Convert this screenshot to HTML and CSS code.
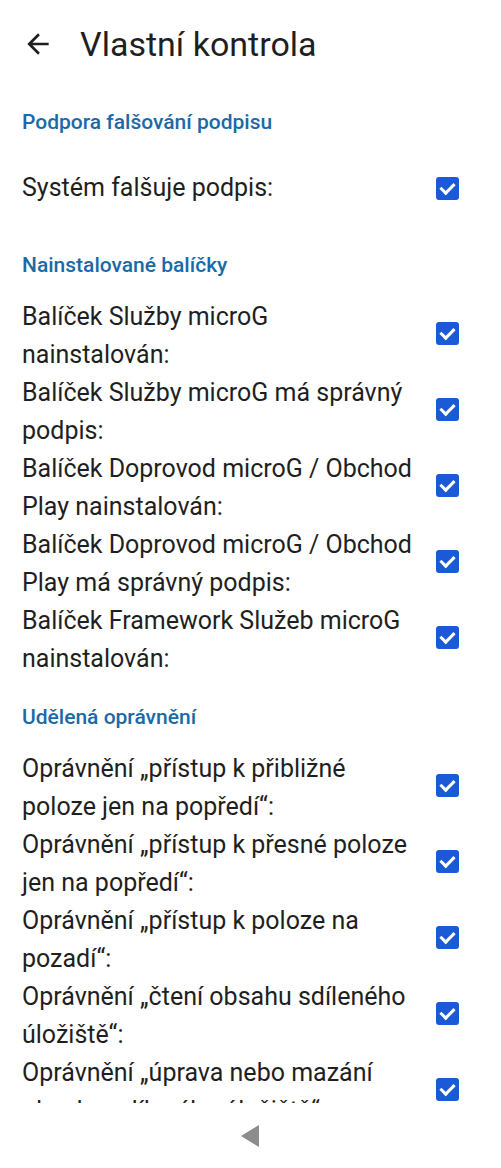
FILE: index.html
```html
<!DOCTYPE html>
<html lang="cs">

<head>
    <meta charset="UTF-8">
    <meta name="viewport" content="width=device-width, initial-scale=1.0">
    <title>Vlastní kontrola</title>
    <link rel="stylesheet" href="styles.css">
</head>

<body>

    <div class="screen">
        <div class="content">

            <!-- Toolbar -->
            <div class="toolbar">
                <svg class="back" viewBox="0 0 24 24" width="32" height="32">
                    <path d="M20 11H7.83l5.59-5.59L12 4l-8 8 8 8 1.41-1.41L7.83 13H20v-2z" fill="#1f1f1f"/>
                </svg>
                <h1 class="title">Vlastní kontrola</h1>
            </div>

            <h2 class="section first">Podpora falšování podpisu</h2>
            <div class="item single">
                <span class="label">Systém falšuje podpis:</span>
                <span class="check"></span>
            </div>

            <h2 class="section">Nainstalované balíčky</h2>
            <div class="item">
                <span class="label">Balíček Služby microG nainstalován:</span>
                <span class="check"></span>
            </div>
            <div class="item">
                <span class="label">Balíček Služby microG má správný podpis:</span>
                <span class="check"></span>
            </div>
            <div class="item">
                <span class="label">Balíček Doprovod microG / Obchod Play nainstalován:</span>
                <span class="check"></span>
            </div>
            <div class="item">
                <span class="label">Balíček Doprovod microG / Obchod Play má správný podpis:</span>
                <span class="check"></span>
            </div>
            <div class="item">
                <span class="label">Balíček Framework Služeb microG nainstalován:</span>
                <span class="check"></span>
            </div>

            <h2 class="section">Udělená oprávnění</h2>
            <div class="item">
                <span class="label">Oprávnění „přístup k přibližné poloze jen na popředí“:</span>
                <span class="check"></span>
            </div>
            <div class="item">
                <span class="label">Oprávnění „přístup k přesné poloze jen na popředí“:</span>
                <span class="check"></span>
            </div>
            <div class="item">
                <span class="label">Oprávnění „přístup k poloze na pozadí“:</span>
                <span class="check"></span>
            </div>
            <div class="item">
                <span class="label">Oprávnění „čtení obsahu sdíleného úložiště“:</span>
                <span class="check"></span>
            </div>
            <div class="item">
                <span class="label">Oprávnění „úprava nebo mazání obsahu sdíleného úložiště“:</span>
                <span class="check"></span>
            </div>

        </div>

        <!-- Navigation bar -->
        <div class="navbar">
            <svg class="nav-back" viewBox="0 0 18 22" width="18" height="22">
                <polygon points="18,0 18,22 0,11" fill="#8c8c8c"/>
            </svg>
        </div>
    </div>

</body>

</html>
```

FILE: styles.css
```css
body {
    margin: 0;
    background-color: #ffffff;
    font-family: Roboto, "Noto Sans", sans-serif;
    color: #1f1f1f;
}

.screen {
    width: 501px;
    height: 1168px;
    display: flex;
    flex-direction: column;
}

.content {
    flex: 1;
    overflow: hidden;
}

/* Toolbar */
.toolbar {
    height: 83px;
    display: flex;
    align-items: center;
    padding-left: 22px;
    padding-top: 5px;
    box-sizing: border-box;
}

.back {
    display: block;
    margin-right: 26px;
}

.title {
    margin: 0;
    font-size: 34px;
    font-weight: 400;
    color: #1f1f1f;
}

/* Section headers */
.section {
    margin: 27px 0 21px;
    padding: 0 22px;
    font-size: 21px;
    line-height: 24px;
    font-weight: 500;
    color: #1a6aa8;
}

.section.first {
    margin-bottom: 16px;
}

/* Rows */
.item {
    min-height: 76px;
    display: flex;
    align-items: center;
    padding: 0 22px;
}

.label {
    flex: 1;
    font-size: 25px;
    line-height: 38px;
    padding-right: 16px;
}

.check {
    width: 23px;
    height: 23px;
    margin-right: 20px;
    margin-bottom: 6px;
    flex-shrink: 0;
    border-radius: 3px;
    background-color: #1a5ad6;
    position: relative;
}

.item.single .check {
    margin-bottom: 0;
}

.check::after {
    content: "";
    position: absolute;
    left: 7px;
    top: 3px;
    width: 6px;
    height: 11px;
    border: solid #ffffff;
    border-width: 0 3px 3px 0;
    transform: rotate(45deg);
}

/* Navigation bar */
.navbar {
    height: 65px;
    display: flex;
    align-items: center;
    justify-content: center;
}

.nav-back {
    display: block;
    margin-right: 2px;
}
```
